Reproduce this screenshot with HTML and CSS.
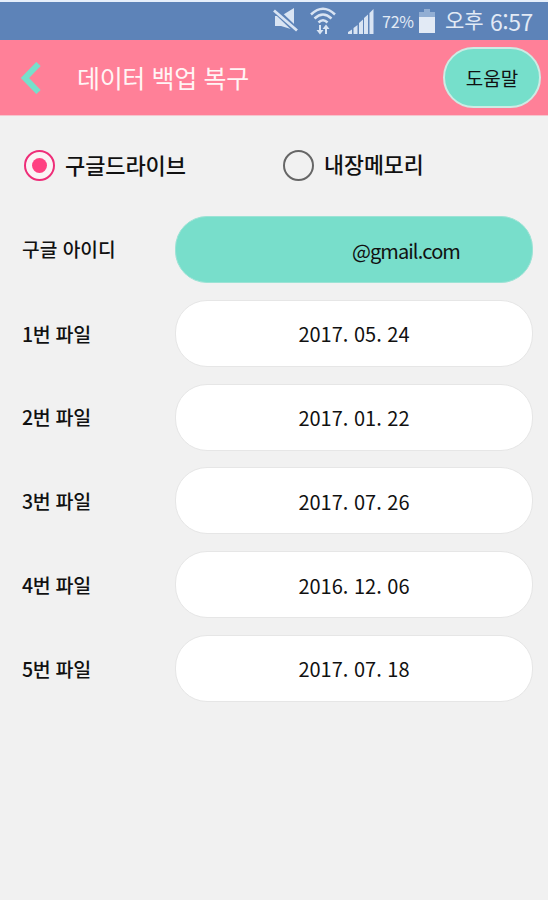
FILE: index.html
```html
<!DOCTYPE html>
<html lang="ko">
<head>
<meta charset="utf-8">
<title>데이터 백업 복구</title>
<link rel="stylesheet" href="styles.css">
</head>
<body>
<div class="status">
  <svg class="mute" width="26" height="26" viewBox="0 0 26 26"><path d="M2 8h6L21 0v22L8 18H2z" fill="#d9e4f3"/><path d="M1 1l23 22" stroke="#5d83b8" stroke-width="6"/><path d="M1 2.500l23 20" stroke="#d9e4f3" stroke-width="2.800"/></svg>
  <svg class="wifi" width="26" height="28" viewBox="0 0 26 28" fill="none" stroke="#d9e4f3" stroke-width="2.500"><path d="M1 7.500q12-11.500 24 0M4.500 11.500q8.500-8 17 0M8.500 15.500q4.500-4.500 9 0"/><path d="M10 18v7M16 27v-7" stroke-width="2"/><path d="M6.500 23h7L10 27.500zM12.500 22h7L16 17.500z" fill="#d9e4f3" stroke="none"/></svg>
  <svg class="signal" width="26" height="25" viewBox="0 0 26 25" fill="#d9e4f3"><path d="M0 25v-2l4-2.500V25zM5.500 25v-6l4-3v9zM11 25V14l4-3.500V25zM16 25V9l4-3.500V25zM21.500 25V4L25.500 0v25z"/></svg>
  <span class="percent">72%</span>
  <svg class="battery" width="16" height="24" viewBox="0 0 16 24"><path d="M5 0h6v3h5v5H0V3h5z" fill="#92aed3"/><path d="M0 8h16v16H0z" fill="#e2eaf5"/></svg>
  <span class="ampm">오후</span><span class="clock">6:57</span>
</div>
<header class="header">
  <svg class="back" width="20" height="32" viewBox="0 0 20 32"><path d="M17.500 2L4 16l13.500 14" fill="none" stroke="#76dfcb" stroke-width="6"/></svg>
  <h1 class="title">데이터 백업 복구</h1>
  <button class="help">도움말</button>
</header>
<main class="main">
  <div class="options">
    <label class="option"><span class="radio on"></span><span class="drive">구글드라이브</span></label>
    <label class="option"><span class="radio"></span><span class="memory">내장메모리</span></label>
  </div>
  <div class="rows">
    <div class="row"><span class="label account">구글 아이디</span><div class="pill mint"><span>@gmail.com</span></div></div>
    <div class="row"><span class="label">1번 파일</span><div class="pill">2017. 05. 24</div></div>
    <div class="row"><span class="label">2번 파일</span><div class="pill">2017. 01. 22</div></div>
    <div class="row"><span class="label">3번 파일</span><div class="pill">2017. 07. 26</div></div>
    <div class="row"><span class="label">4번 파일</span><div class="pill">2016. 12. 06</div></div>
    <div class="row"><span class="label">5번 파일</span><div class="pill">2017. 07. 18</div></div>
  </div>
</main>
</body>
</html>
```
FILE: styles.css
```css
* { box-sizing: border-box; }
body {
  margin: 0;
  width: 548px;
  height: 900px;
  overflow: hidden;
  background: #f1f1f1;
  color: #111;
  font-family: "Noto Sans CJK KR", sans-serif;
}
.status {
  display: flex;
  align-items: center;
  height: 40px;
  padding-left: 273px;
  border-top: 2px solid #e6effb;
  background: #5d83b8;
  color: #e2eaf5;
  line-height: 1;
  white-space: nowrap;
}
.wifi { margin-left: 11px; }
.signal { margin-left: 12px; }
.percent { width: 32px; margin-left: 8px; font-size: 16px; letter-spacing: -0.2px; }
.battery { margin-left: 5px; }
.ampm { width: 38px; margin-left: 10px; padding-bottom: 3px; font-size: 21px; }
.clock { margin-left: 7px; font-size: 23px; letter-spacing: -0.5px; }
.header {
  display: flex;
  align-items: center;
  height: 76px;
  padding: 0 7px 0 21px;
  border-bottom: 1px solid #f5c5cd;
  background: #ff8098;
}
.title {
  margin: 0 0 0 36px;
  color: #fff5f5;
  font-size: 25px;
  font-weight: 400;
  line-height: 1;
  letter-spacing: -0.35px;
}
.help {
  width: 98px;
  height: 61px;
  margin-left: auto;
  padding: 0;
  border: 2px solid #cdebe4;
  border-radius: 31px;
  background: #76dfcb;
  color: #111;
  font: 400 19px/1 "Noto Sans CJK KR", sans-serif;
}
.options {
  display: grid;
  grid-template-columns: 259px 1fr;
  height: 100px;
  padding: 0 0 2px 24px;
}
.option { display: flex; align-items: center; gap: 10px; line-height: 1; font-weight: 500; }
.radio {
  display: grid;
  place-items: center;
  width: 31px;
  height: 31px;
  border: 2.5px solid #666;
  border-radius: 50%;
}
.on { border-color: #ee2d78; background: #faf3f5; }
.on::after { content: ""; width: 15px; height: 15px; border-radius: 50%; background: #ff4081; }
.drive { padding-bottom: 2px; font-size: 22px; letter-spacing: -0.1px; }
.memory { padding-bottom: 2px; font-size: 21.7px; }
.rows { display: grid; gap: 16.8px; padding: 0 15px 0 22px; }
.row { display: grid; grid-template-columns: 153px 1fr; align-items: center; height: 67px; }
.label { font-size: 19.5px; font-weight: 500; line-height: 1; letter-spacing: -0.3px; }
.account { font-size: 19.2px; letter-spacing: 0; }
.pill {
  display: flex;
  align-items: center;
  justify-content: center;
  height: 67px;
  padding-top: 2px;
  border: 1px solid #e6e6e6;
  border-radius: 32px;
  background: #fff;
  font-size: 20px;
  line-height: 1;
}
.mint {
  justify-content: flex-end;
  padding-right: 72px;
  border-color: #9ce3d5;
  background: #78decb;
  letter-spacing: -0.9px;
}
```
